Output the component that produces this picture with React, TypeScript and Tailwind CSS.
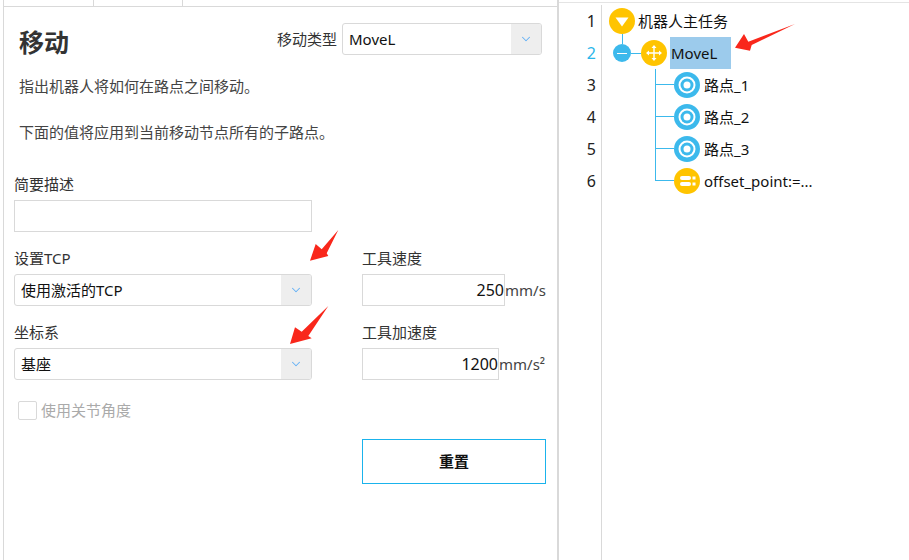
import { ChevronDown } from 'lucide-react';

function Select({ value, className }: { value: string; className: string }) {
  return (
    <div className={`flex h-8 items-stretch overflow-hidden rounded-[3px] border border-[#d9d9d9] bg-white ${className}`}>
      <div className="flex flex-1 items-center pt-px pl-[6px] text-[15px] text-[#111]">{value}</div>
      <div className="flex w-[30px] items-center justify-center bg-[#eeeeee]">
        <ChevronDown className="h-[14px] w-[14px] text-[#63b0f5]" strokeWidth={1.75} />
      </div>
    </div>
  );
}

function NumberField({ value, unit, label, inputWidth }: { value: string; unit: React.ReactNode; label: string; inputWidth: string }) {
  return (
    <div>
      <div className="flex h-4 items-center text-[15px] text-[#333]">{label}</div>
      <div className="mt-2 flex items-center">
        <div className={`flex h-8 items-center justify-end border border-[#d9d9d9] text-[16px] text-[#111] ${inputWidth}`}>{value}</div>
        <span className="text-[15px] text-[#444]">{unit}</span>
      </div>
    </div>
  );
}

function RootIcon() {
  return (
    <svg width="26" height="26" viewBox="0 0 26 26" className="shrink-0">
      <circle cx="13" cy="13" r="13" fill="#ffc400" />
      <path d="M6.5 9.5H19.5L13 18.5Z" fill="#fff" />
    </svg>
  );
}

function MoveIcon() {
  return (
    <svg width="26" height="26" viewBox="0 0 26 26" className="shrink-0">
      <circle cx="13" cy="13" r="13" fill="#ffc400" />
      <path d="M13 7V19M7 13H19" stroke="#fff" strokeWidth="1.4" />
      <path d="M13 5L15.5 8H10.5ZM13 21L15.5 18H10.5ZM5 13L8 10.5V15.5ZM21 13L18 10.5V15.5Z" fill="#fff" />
    </svg>
  );
}

function PointIcon() {
  return (
    <svg width="26" height="26" viewBox="0 0 26 26" className="shrink-0">
      <circle cx="13" cy="13" r="13" fill="#3cb9ec" />
      <circle cx="13" cy="13" r="8.5" fill="#fff" />
      <circle cx="13" cy="13" r="6.5" fill="#3cb9ec" />
      <circle cx="13" cy="13" r="3.5" fill="#fff" />
    </svg>
  );
}

function AssignIcon() {
  return (
    <svg width="26" height="26" viewBox="0 0 26 26" className="shrink-0">
      <circle cx="13" cy="13" r="13" fill="#ffc400" />
      <rect x="6" y="8" width="11" height="4" rx="2" fill="#fff" />
      <rect x="6" y="14" width="11" height="4" rx="2" fill="#fff" />
      <rect x="18.5" y="8.5" width="3" height="3" fill="#fff" />
      <rect x="18.5" y="14.5" width="3" height="3" fill="#fff" />
    </svg>
  );
}

function ChildRow({ label, last, icon }: { label: string; last?: boolean; icon: React.ReactNode }) {
  return (
    <div className="flex h-8 items-center pl-[46px]">
      {last ? (
        <div className="h-4 w-[19px] self-start border-b border-l border-[#3cb9ec]" />
      ) : (
        <div className="h-8 w-[19px] border-l border-[#3cb9ec]">
          <div className="h-4 border-b border-[#3cb9ec]" />
        </div>
      )}
      {icon}
      <span className="ml-[4px] text-[15px] text-[#111]">{label}</span>
    </div>
  );
}

function RedArrow({ className, width, height, points }: { className: string; width: number; height: number; points: string }) {
  return (
    <svg width={width} height={height} viewBox={`0 0 ${width} ${height}`} className={`absolute ${className}`}>
      <polygon points={points} fill="#f9271b" />
    </svg>
  );
}

export default function App() {
  return (
    <div className="relative flex h-[560px] w-[909px] overflow-hidden bg-white font-['Noto_Sans','Noto_Sans_CJK_SC',sans-serif]">
      {/* left: properties panel */}
      <div className="ml-[3px] flex h-full w-[556px] flex-col border-r-2 border-l border-[#d9d9d9]">
        <div className="flex h-[7px] shrink-0 border-b border-[#d9d9d9]">
          <div className="w-[90px] border-r border-[#d9d9d9]" />
          <div className="w-[89px] border-r border-[#d9d9d9]" />
        </div>

        <div className="flex items-center pt-[16px] pl-[15px] pr-[15px]">
          <h1 className="text-[25px] leading-[38px] font-bold text-[#333]">移动</h1>
          <div className="ml-auto flex items-center self-start">
            <span className="mr-[5px] text-[15px] text-[#333]">移动类型</span>
            <Select value="MoveL" className="w-[200px]" />
          </div>
        </div>

        <p className="mt-[13px] pl-[15px] text-[15px] leading-[24px] text-[#444]">指出机器人将如何在路点之间移动。</p>
        <p className="mt-[22px] pl-[15px] text-[15px] leading-[24px] text-[#444]">下面的值将应用到当前移动节点所有的子路点。</p>

        <div className="mt-[32px] pl-[10px]">
          <div className="flex h-4 items-center text-[15px] text-[#333]">简要描述</div>
          <div className="mt-2 h-8 w-[298px] border border-[#d9d9d9]" />
        </div>

        <div className="mt-[18px] flex pl-[10px]">
          <div className="w-[298px]">
            <div className="flex h-4 items-center text-[15px] text-[#333]">设置TCP</div>
            <Select value="使用激活的TCP" className="mt-2 w-[298px]" />
            <div className="mt-[18px] flex h-4 items-center text-[15px] text-[#333]">坐标系</div>
            <Select value="基座" className="mt-2 w-[298px]" />
            <div className="mt-[19px] flex items-center pl-[4px]">
              <div className="h-[19px] w-[19px] rounded-[2px] border border-[#d9d9d9]" />
              <span className="ml-[4px] text-[15px] text-[#aaaaaa]">使用关节角度</span>
            </div>
          </div>
          <div className="ml-[50px] w-[184px]">
            <NumberField label="工具速度" value="250" unit="mm/s" inputWidth="w-[143px]" />
            <div className="mt-[18px]">
              <NumberField label="工具加速度" value="1200" unit="mm/s²" inputWidth="w-[137px]" />
            </div>
            <button className="mt-[59px] h-[45px] w-[184px] border border-[#1ab3ec] text-[15px] font-bold text-[#111]">重置</button>
          </div>
        </div>
      </div>

      {/* right: program tree */}
      <div className="flex h-full flex-1 flex-col">
        <div className="h-[3px] shrink-0 border-b border-[#e4e4e4]" />
        <div className="flex flex-1 pt-[2px]">
          <div className="w-[43px] shrink-0 border-r border-[#d9d9d9] pr-[5px] text-right text-[16px] text-[#222]">
            <div className="flex h-8 items-center justify-end">1</div>
            <div className="flex h-8 items-center justify-end text-[#29b6ea]">2</div>
            <div className="flex h-8 items-center justify-end">3</div>
            <div className="flex h-8 items-center justify-end">4</div>
            <div className="flex h-8 items-center justify-end">5</div>
            <div className="flex h-8 items-center justify-end">6</div>
          </div>
          <div className="flex-1 pl-[7px]">
            <div className="flex h-8 items-center">
              <RootIcon />
              <span className="ml-[3px] text-[15px] text-[#111]">机器人主任务</span>
            </div>
            <div className="relative flex h-8 items-center pl-[4px]">
              <div className="absolute top-[-3px] left-[13px] h-[10px] w-px bg-[#3cb9ec]" />
              <div className="flex h-[18px] w-[18px] items-center justify-center rounded-full bg-[#3cb9ec]">
                <div className="h-px w-[10px] bg-white" />
              </div>
              <div className="h-px w-[10px] bg-[#3cb9ec]" />
              <MoveIcon />
              <span className="ml-[3px] flex h-8 w-[61px] items-center bg-[#9ccbec] pl-px text-[15px] text-[#111]">MoveL</span>
            </div>
            <ChildRow label="路点_1" icon={<PointIcon />} />
            <ChildRow label="路点_2" icon={<PointIcon />} />
            <ChildRow label="路点_3" icon={<PointIcon />} />
            <ChildRow label="offset_point:=..." last icon={<AssignIcon />} />
          </div>
        </div>
      </div>

      {/* red annotation arrows */}
      <RedArrow className="top-[229px] left-[309px]" width={31} height={33} points="1,31.7 6.7,15 12.7,20.3 29.3,1 17.7,24.3 19.3,27" />
      <RedArrow className="top-[305px] left-[289px]" width={40} height={40} points="1,39 6,22.3 12.7,26.7 39.3,1 19.3,31 22.7,33.3" />
      <RedArrow className="top-[23px] left-[734px]" width={62} height={29} points="1,24.7 10,11 14.3,18.7 61,1 17.7,22 16,27.7" />
    </div>
  );
}
